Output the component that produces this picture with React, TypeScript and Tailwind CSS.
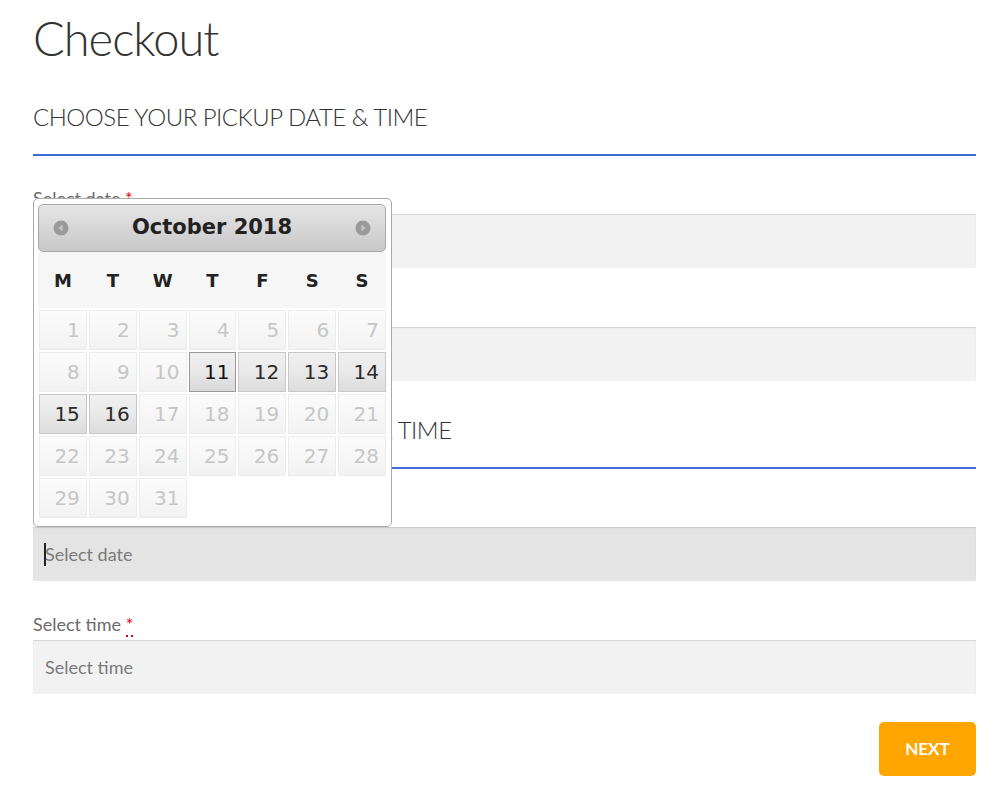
import React from "react";

const page = { fontFamily: "Lato, 'Open Sans', sans-serif" };
const dv = { fontFamily: "'DejaVu Sans', Verdana, sans-serif" };

const days = ["M", "T", "W", "T", "F", "S", "S"];
const open = [11, 12, 13, 14, 15, 16];

function Arrow({ dir }: { dir: "w" | "e" }) {
  return (
    <svg width="16" height="16" viewBox="0 0 16 16">
      <circle cx="8" cy="8" r="7.5" fill="#9a9a9a" />
      {dir === "w" ? (
        <path d="M9.5 4.5 L5.5 8 L9.5 11.5 Z" fill="#c4c4c4" />
      ) : (
        <path d="M6.5 4.5 L10.5 8 L6.5 11.5 Z" fill="#c4c4c4" />
      )}
    </svg>
  );
}

function DayCell({ n }: { n: number }) {
  const active = open.includes(n);
  let cls =
    "h-[40px] flex items-center justify-end pr-[6px] text-[20px] border bg-gradient-to-b ";
  if (n === 11) {
    cls += "border-[#999] from-[#efefef] via-[#e8e8e8] to-[#d9d9d9] text-[#111]";
  } else if (active) {
    cls += "border-[#c8c8c8] from-[#f0f0f0] via-[#e9e9e9] to-[#dcdcdc] text-[#2a2a2a]";
  } else {
    cls += "border-[#ececec] from-[#fcfcfc] to-[#f2f2f2] text-[#c6c6c6]";
  }
  return (
    <div className={cls} style={dv}>
      {n}
    </div>
  );
}

function Datepicker() {
  const nums = Array.from({ length: 31 }, (_, i) => i + 1);
  return (
    <div className="absolute left-0 top-[190px] w-[359px] h-[329px] bg-white border border-[#aaa] rounded-[5px] pl-[4px] pr-[5px] pt-[5px]">
      <div className="h-[48px] flex items-center justify-between px-[14px] border border-[#aaa] rounded-[5px] bg-gradient-to-b from-[#e6e6e6] to-[#c8c8c8]">
        <Arrow dir="w" />
        <span className="text-[21px] font-bold text-[#222]" style={dv}>
          October 2018
        </span>
        <Arrow dir="e" />
      </div>
      <div className="bg-[#f6f6f6] h-[56px] grid grid-cols-7 gap-[2px] items-center pl-[1px]">
        {days.map((d, i) => (
          <div
            key={i}
            className="text-center text-[18px] font-bold text-[#222]"
            style={dv}
          >
            {d}
          </div>
        ))}
      </div>
      <div className="grid grid-cols-7 gap-[2px] mt-[2px] pl-[1px]">
        {nums.map((n) => (
          <DayCell key={n} n={n} />
        ))}
      </div>
    </div>
  );
}

function Field({
  label,
  placeholder,
  focused,
}: {
  label: string;
  placeholder: string;
  focused?: boolean;
}) {
  return (
    <div className="mb-[33px]">
      <label className="block h-[26px] leading-[21px] text-[18px] text-[#6b6b6b]">
        {label}{" "}
        <abbr
          title="required"
          className="text-red-600 no-underline border-b-2 border-dotted border-red-600"
        >
          *
        </abbr>
      </label>
      <div className="relative">
        <input
          readOnly
          placeholder={placeholder}
          className={
            "w-full h-[54px] pl-[12px] text-[18px] outline-none caret-transparent placeholder:text-[#7a7a7a] shadow-[inset_0_1px_1px_rgba(0,0,0,0.12)] " +
            (focused ? "bg-[#e4e4e4]" : "bg-[#f2f2f2]")
          }
        />
        {focused && (
          <span className="absolute left-[11px] top-[16px] w-[2px] h-[23px] bg-[#222]" />
        )}
      </div>
    </div>
  );
}

function SectionTitle({ children, top }: { children: string; top: string }) {
  return (
    <h2
      className={
        "text-[24px] leading-[32px] tracking-[-0.5px] font-light text-[#333] pb-[21px] border-b-2 border-[#3f6ad8] mb-[32px] " +
        top
      }
    >
      {children}
    </h2>
  );
}

export default function App() {
  return (
    <div className="bg-white min-h-[797px] pt-[8px]" style={page}>
      <div className="relative ml-[33px] w-[943px]">
        <h1 className="text-[47px] leading-[60px] tracking-[-1px] font-light text-[#333]">
          Checkout
        </h1>
        <SectionTitle top="mt-[33px]">CHOOSE YOUR PICKUP DATE &amp; TIME</SectionTitle>
        <Field label="Select date" placeholder="Select date" />
        <Field label="Select time" placeholder="Select time" />
        <SectionTitle top="mt-[0px]">CHOOSE YOUR DELIVERY DATE &amp; TIME</SectionTitle>
        <Field label="Select date" placeholder="Select date" focused />
        <Field label="Select time" placeholder="Select time" />
        <div className="flex justify-end -mt-[5px]">
          <button className="w-[97px] h-[54px] rounded-[5px] bg-[#ffa500] text-white font-bold text-[17px]">
            NEXT
          </button>
        </div>
        <Datepicker />
      </div>
    </div>
  );
}
